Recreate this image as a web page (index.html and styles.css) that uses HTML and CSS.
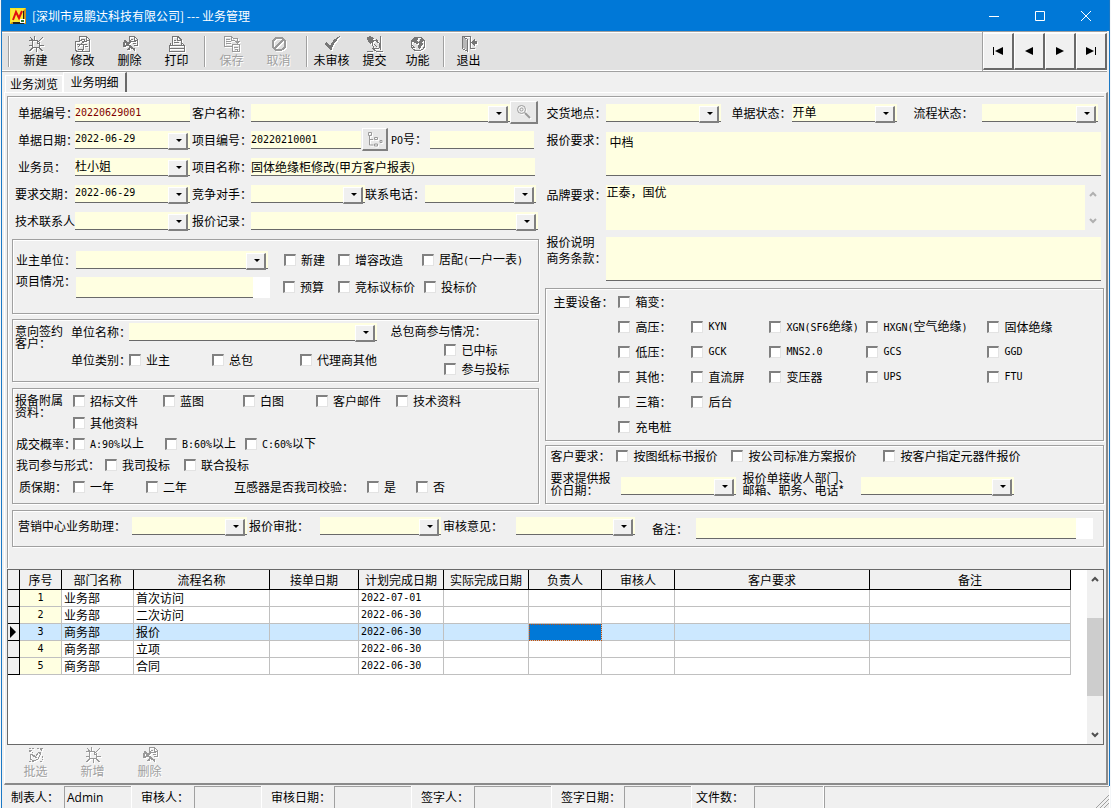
FILE: index.html
```html
<!DOCTYPE html>
<html lang="zh-CN">
<head>
<meta charset="utf-8">
<title>业务管理</title>
<link rel="stylesheet" href="styles.css">
</head>
<body>
<svg class="defs" aria-hidden="true">
  <symbol id="i-new" viewBox="0 0 16 16"><path d="M4.500 4.500h5l2 2v5h-7zM9.500 4.500v2.500h2.500M0.500 4.500h4M2 1l3 3.500M6.500 0v4.500M15 1l-4 4M12 9.500h4M11.500 12l3 3M8.500 12v4M4.500 12l-3 3M0.500 9.500h4"/></symbol>
  <symbol id="i-edit" viewBox="0 0 16 16"><path d="M4.500 5V.500h7l3 3v12h-9M11.500 1v3h3M6 3.500h4M7 5.500h5M9 8.500h3M10 10.500h3M.500 5.500h3l5-2 1 1.500-4 3.500h3v5l-2 2h-5l-1-2zM2 8.500h3M3 11l5-5M3 13.500h5"/></symbol>
  <symbol id="i-del" viewBox="0 0 16 16"><path d="M7.500 7V.500h5l3 3v6h-4M12.500 1v3h3M9 3.500h2M9 5.500h5M11 7.500h3"/><path class="thick" d="M3 5l3 3-2 1.500H1.500v-2zM5 8l8 6M5 9l4-4M9 10l-3 4"/></symbol>
  <symbol id="i-print" viewBox="0 0 16 16"><path d="M3.500 9V.500h5.500l3 3V9M8.500 1v3h3M5 4.500h2M5 6.500h5M.500 9.500h15v5.500H.500zM2 7.500L.500 9.500M13.500 7.500l2 2M1 12.500h14"/></symbol>
  <symbol id="i-save" viewBox="0 0 16 16"><path d="M8 10.500H.500v-10h7l3 3M7.500 1v3h3M2 3.500h4M2 5.500h5M2 7.500h5M8.500 8.500h7v7h-7zM10 11h4M10.500 13.500h3v2M10 2.500h3.500V6M11.500 5l2 2 2-2"/></symbol>
  <symbol id="i-stop" viewBox="0 0 16 16"><circle class="thick" cx="8" cy="8" r="6.500"/><path class="thick" d="M3.500 12.500l9-9"/></symbol>
  <symbol id="i-check" viewBox="0 0 16 16"><path class="solid" d="M0 8l3-2 3 4C8 5 11 2 16 0v1c-4 3-7 8-8.500 13H6z"/></symbol>
  <symbol id="i-submit" viewBox="0 0 16 16"><path class="solid" d="M0 1l3-1 4 2-1 3-3 3-2-2z"/><path d="M5 6l3-2 4 3 1 4-2 2-4-1-2-4zM7 8l3 3M13.500 0v14M9 3.500l2 2M0 15.500h6M9 15.500h7M5 12l4 3"/></symbol>
  <symbol id="i-globe" viewBox="0 0 16 16"><circle cx="8" cy="8" r="7"/><path class="solid" d="M3 3l4-2 1 2-1 2 2 1-1 2H6L5 7 2 6zM9 3l3-1 2 3-2 1 1 2-2 3-2 2-1-3 1-2-1-2 2-2zM2 9l3 2-1 2z"/></symbol>
  <symbol id="i-exit" viewBox="0 0 16 16"><path d="M1.500 12.500V.500h8v12h4M6.500 15.500v-12l-5-3v12z"/><path class="pale" d="M2 1l4 3v10l-4-2z"/><path class="solid" d="M10 6l4-4v3h2v3h-2v3z"/></symbol>
  <symbol id="i-batch" viewBox="0 0 16 16"><path stroke-dasharray="2 1" d="M1 1.500h6M9 1.500h6M1 4l4 2M14 3l-4 5M1 14.500h5M12 14.500h3M14.500 9v4"/><path d="M1.500 3l2 1M3 7l4 3 4-5 2 1-3 6-4 2-4-2zM12 3l3-2M5 8l4 3"/></symbol>
  <symbol id="i-find" viewBox="0 0 16 16"><circle cx="5.500" cy="5.500" r="4"/><circle cx="5.500" cy="5.500" r="1.500"/><path class="thick" d="M9 9l5 5"/></symbol>
  <symbol id="i-tree" viewBox="0 0 16 16"><path d="M1.500 1.500h3v3h-3zM7.500 6.500h3v2h-3zM13 9.500h2v2h-2zM7.500 13h3v2h-3zM2.500 5v9h4M3 8.500h3"/></symbol>
  <symbol id="i-up" viewBox="0 0 8 6"><path d="M1 5l3-3 3 3"/></symbol>
  <symbol id="i-down" viewBox="0 0 8 6"><path d="M1 1l3 3 3-3"/></symbol>
</svg>
<div class="window">
  <header class="titlebar">
    <svg class="app-icon" viewBox="0 0 16 16"><rect width="16" height="16" fill="#f8e51c"/><path fill="#a33a10" d="M16 0v16H0z" opacity=".5"/><path fill="#222" d="M14 3v13H3v-2h9V3z"/><rect x="1" y="1" width="12" height="13" fill="#fbea3c"/><path fill="none" stroke="#e01010" stroke-width="2" d="M3 12l3-8 3 6 3-7"/><rect x="10" y="11" width="5" height="4" fill="#fff"/><path fill="#2a7a35" d="M11 12h3v2h-3z"/></svg>
    <h1>[深圳市易鹏达科技有限公司] --- 业务管理</h1>
    <button class="cap" aria-label="最小化"><svg viewBox="0 0 12 12"><path d="M1 6.500h10"/></svg></button>
    <button class="cap" aria-label="最大化"><svg viewBox="0 0 12 12"><path d="M1.500 1.500h9v9h-9z"/></svg></button>
    <button class="cap" aria-label="关闭"><svg viewBox="0 0 12 12"><path d="M1 1l10 10M11 1L1 11"/></svg></button>
  </header>

  <div class="toolbar">
    <i class="grip"></i>
    <button class="tool"><svg><use href="#i-new"/></svg>新建</button>
    <button class="tool"><svg><use href="#i-edit"/></svg>修改</button>
    <button class="tool"><svg><use href="#i-del"/></svg>删除</button>
    <button class="tool"><svg><use href="#i-print"/></svg>打印</button>
    <i class="sep"></i>
    <button class="tool" disabled><svg><use href="#i-save"/></svg>保存</button>
    <button class="tool" disabled><svg><use href="#i-stop"/></svg>取消</button>
    <i class="sep"></i>
    <button class="tool narrow"><svg><use href="#i-check"/></svg>未审核</button>
    <button class="tool narrow"><svg><use href="#i-submit"/></svg>提交</button>
    <button class="tool narrow"><svg><use href="#i-globe"/></svg>功能</button>
    <i class="sep"></i>
    <button class="tool narrow"><svg><use href="#i-exit"/></svg>退出</button>
    <nav class="pager">
      <button aria-label="首条"><svg viewBox="0 0 12 8"><path d="M1 0h1v8H1zM11 0v8L3 4z"/></svg></button>
      <button aria-label="上一条"><svg viewBox="0 0 12 8"><path d="M10 0v8L2 4z"/></svg></button>
      <button aria-label="下一条"><svg viewBox="0 0 12 8"><path d="M2 0v8l8-4z"/></svg></button>
      <button aria-label="末条"><svg viewBox="0 0 12 8"><path d="M1 0v8l8-4zM10 0h1v8h-1z"/></svg></button>
    </nav>
  </div>

  <div class="tabs" role="tablist">
    <button class="tab" role="tab">业务浏览</button>
    <button class="tab active" role="tab" aria-selected="true">业务明细</button>
  </div>

  <main class="page">
    <form class="form">
      <div class="columns">
        <div class="col">
          <div class="row main-a">
            <label class="in-6" for="no">单据编号：</label><input id="no" class="field num red" value="20220629001">
            <label class="in-2" for="cust">客户名称：</label><span class="combo"><select id="cust"></select></span>
            <button type="button" class="mini" aria-label="查找客户"><svg><use href="#i-find"/></svg></button>
          </div>
          <div class="row main-b">
            <label class="in-6" for="date">单据日期：</label><span class="combo"><select id="date" class="num"><option>2022-06-29</option></select></span>
            <label class="in-2" for="proj">项目编号：</label><input id="proj" class="field num" value="20220210001">
            <button type="button" class="mini" aria-label="选择项目"><svg><use href="#i-tree"/></svg></button>
            <label class="in-3" for="po"><span class="num">PO</span>号：</label><input id="po" class="field">
          </div>
          <div class="row main-c">
            <label class="in-6" for="sales">业务员：</label><span class="combo"><select id="sales"><option>杜小姐</option></select></span>
            <label class="in-2" for="pname">项目名称：</label><input id="pname" class="field" value="固体绝缘柜修改(甲方客户报表)">
          </div>
          <div class="row main-d">
            <label class="in-3" for="due">要求交期：</label><span class="combo"><select id="due" class="num"><option>2022-06-29</option></select></span>
            <label class="in-2" for="rival">竞争对手：</label><span class="combo"><select id="rival"></select></span>
            <label for="tel">联系电话：</label><span class="combo"><select id="tel"></select></span>
          </div>
          <div class="row main-e">
            <label class="in-3" for="tech">技术联系人</label><span class="combo"><select id="tech"></select></span>
            <label class="in-2" for="log">报价记录：</label><span class="combo"><select id="log"></select></span>
          </div>

          <section class="group owner">
            <div class="row owner-a">
              <label class="in-3" for="owner">业主单位：</label><span class="combo"><select id="owner"></select></span>
              <label class="ck first"><input type="checkbox">新建</label>
              <label class="ck"><input type="checkbox">增容改造</label>
              <label class="ck"><input type="checkbox"><span>居配<span class="num">(</span>一户一表<span class="num">)</span></span></label>
            </div>
            <div class="row owner-b">
              <label class="in-3 top" for="state">项目情况：</label><span class="memo-s"><textarea id="state" class="field"></textarea></span>
              <label class="ck first"><input type="checkbox">预算</label>
              <label class="ck"><input type="checkbox">竞标议标价</label>
              <label class="ck"><input type="checkbox">投标价</label>
            </div>
          </section>

          <section class="group sign">
            <div class="two-line">意向签约<br>客户：</div>
            <div class="sign-mid">
              <div class="row unit-a"><label for="unit">单位名称：</label><span class="combo"><select id="unit"></select></span></div>
              <div class="row unit-b"><span>单位类别：</span>
                <label class="ck"><input type="checkbox">业主</label>
                <label class="ck"><input type="checkbox">总包</label>
                <label class="ck"><input type="checkbox">代理商其他</label>
              </div>
            </div>
            <div class="sign-end">
              <span>总包商参与情况：</span>
              <label class="ck"><input type="checkbox">已中标</label>
              <label class="ck"><input type="checkbox">参与投标</label>
            </div>
          </section>

          <section class="group docs">
            <div class="docs-files">
              <div class="two-line">报备附属<br>资料：</div>
              <label class="ck"><input type="checkbox">招标文件</label>
              <label class="ck"><input type="checkbox">蓝图</label>
              <label class="ck"><input type="checkbox">白图</label>
              <label class="ck"><input type="checkbox">客户邮件</label>
              <label class="ck"><input type="checkbox">技术资料</label>
              <label class="ck"><input type="checkbox">其他资料</label>
            </div>
            <div class="row odds"><span class="in-3">成交概率：</span>
              <label class="ck"><input type="checkbox"><span><span class="num">A:90%</span>以上</span></label>
              <label class="ck"><input type="checkbox"><span><span class="num">B:60%</span>以上</span></label>
              <label class="ck"><input type="checkbox"><span><span class="num">C:60%</span>以下</span></label>
            </div>
            <div class="row join"><span class="in-3">我司参与形式：</span>
              <label class="ck"><input type="checkbox">我司投标</label>
              <label class="ck"><input type="checkbox">联合投标</label>
            </div>
            <div class="row warranty"><span class="in-6">质保期：</span>
              <label class="ck"><input type="checkbox">一年</label>
              <label class="ck"><input type="checkbox">二年</label>
              <span>互感器是否我司校验：</span>
              <label class="ck"><input type="checkbox">是</label>
              <label class="ck"><input type="checkbox">否</label>
            </div>
          </section>
        </div>

        <div class="col">
          <div class="row place">
            <label for="place">交货地点：</label><span class="combo"><select id="place"></select></span>
            <label class="in-10" for="bill">单据状态：</label><span class="combo"><select id="bill"><option>开单</option></select></span>
            <label class="in-16" for="flow">流程状态：</label><span class="combo"><select id="flow"></select></span>
          </div>
          <div class="memo-row"><label for="m1">报价要求：</label><textarea id="m1" class="field memo inset">中档</textarea></div>
          <div class="memo-row scrolling"><label class="lower" for="m2">品牌要求：</label><textarea id="m2" class="field memo">正泰，国优</textarea>
            <div class="spin"><svg><use href="#i-up"/></svg><svg><use href="#i-down"/></svg></div></div>
          <div class="memo-row"><label class="raised" for="m3">报价说明<br>商务条款：</label><textarea id="m3" class="field memo"></textarea></div>

          <section class="group gear">
            <span>主要设备：</span>
            <label class="ck c2"><input type="checkbox">箱变：</label>
            <label class="ck c2"><input type="checkbox">高压：</label>
            <label class="ck"><input type="checkbox"><span class="num">KYN</span></label>
            <label class="ck"><input type="checkbox"><span><span class="num">XGN(SF6</span>绝缘<span class="num">)</span></span></label>
            <label class="ck"><input type="checkbox"><span><span class="num">HXGN(</span>空气绝缘<span class="num">)</span></span></label>
            <label class="ck"><input type="checkbox">固体绝缘</label>
            <label class="ck c2"><input type="checkbox">低压：</label>
            <label class="ck"><input type="checkbox"><span class="num">GCK</span></label>
            <label class="ck"><input type="checkbox"><span class="num">MNS2.0</span></label>
            <label class="ck"><input type="checkbox"><span class="num">GCS</span></label>
            <label class="ck"><input type="checkbox"><span class="num">GGD</span></label>
            <label class="ck c2"><input type="checkbox">其他：</label>
            <label class="ck"><input type="checkbox">直流屏</label>
            <label class="ck"><input type="checkbox">变压器</label>
            <label class="ck"><input type="checkbox"><span class="num">UPS</span></label>
            <label class="ck"><input type="checkbox"><span class="num">FTU</span></label>
            <label class="ck c2"><input type="checkbox">三箱：</label>
            <label class="ck"><input type="checkbox">后台</label>
            <label class="ck c2"><input type="checkbox">充电桩</label>
          </section>

          <section class="group wants">
            <div class="row wants-a"><span>客户要求：</span>
              <label class="ck"><input type="checkbox">按图纸标书报价</label>
              <label class="ck"><input type="checkbox">按公司标准方案报价</label>
              <label class="ck"><input type="checkbox">按客户指定元器件报价</label>
            </div>
            <div class="row wants-b">
              <label class="tight" for="qd">要求提供报<br>价日期：</label><span class="combo"><select id="qd"></select></span>
              <label class="tight in-6" for="rcv">报价单接收人部门、<br>邮箱、职务、电话*</label><span class="combo"><select id="rcv"></select></span>
            </div>
          </section>
        </div>
      </div>

      <section class="group review">
        <label for="asst">营销中心业务助理：</label><span class="combo"><select id="asst"></select></span>
        <label class="in-2" for="appr">报价审批：</label><span class="combo"><select id="appr"></select></span>
        <label class="in-2" for="opin">审核意见：</label><span class="combo"><select id="opin"></select></span>
        <label class="lower" for="note">备注：</label><span class="memo-s"><textarea id="note" class="field"></textarea></span>
      </section>
    </form>

    <div class="grid-frame">
      <table>
        <colgroup><col class="w-mark"><col class="w-no"><col class="w-dept"><col class="w-flow"><col class="w-recv"><col class="w-date"><col class="w-date"><col class="w-who"><col class="w-who"><col class="w-want"><col></colgroup>
        <thead><tr><th></th><th>序号</th><th>部门名称</th><th>流程名称</th><th>接单日期</th><th>计划完成日期</th><th>实际完成日期</th><th>负责人</th><th>审核人</th><th>客户要求</th><th>备注</th></tr></thead>
        <tbody>
          <tr><td></td><td>1</td><td>业务部</td><td>首次访问</td><td></td><td class="num">2022-07-01</td><td></td><td></td><td></td><td></td><td></td></tr>
          <tr><td></td><td>2</td><td>业务部</td><td>二次访问</td><td></td><td class="num">2022-06-30</td><td></td><td></td><td></td><td></td><td></td></tr>
          <tr class="current"><td><svg class="mark" viewBox="0 0 6 12"><path d="M0 0v12l6-6z"/></svg></td><td>3</td><td>商务部</td><td>报价</td><td></td><td class="num">2022-06-30</td><td></td><td class="cell-on"></td><td></td><td></td><td></td></tr>
          <tr><td></td><td>4</td><td>商务部</td><td>立项</td><td></td><td class="num">2022-06-30</td><td></td><td></td><td></td><td></td><td></td></tr>
          <tr><td></td><td>5</td><td>商务部</td><td>合同</td><td></td><td class="num">2022-06-30</td><td></td><td></td><td></td><td></td><td></td></tr>
        </tbody>
      </table>
      <div class="scrollbar"><svg><use href="#i-up"/></svg><i class="thumb"></i><svg><use href="#i-down"/></svg></div>
    </div>

    <div class="subbar">
      <button class="tool" disabled><svg><use href="#i-batch"/></svg>批选</button>
      <button class="tool" disabled><svg><use href="#i-new"/></svg>新增</button>
      <button class="tool" disabled><svg><use href="#i-del"/></svg>删除</button>
    </div>
  </main>

  <footer class="status">
    <span>制表人：</span><output>Admin</output>
    <span>审核人：</span><output></output>
    <span>审核日期：</span><output></output>
    <span>签字人：</span><output></output>
    <span>签字日期：</span><output></output>
    <span class="files">文件数：</span><output></output>
    <output class="rest"><svg class="size-grip" viewBox="0 0 14 14"><path d="M1 14L14 1M5 14l9-9M9 14l5-5"/></svg></output>
  </footer>
</div>
</body>
</html>
```
FILE: styles.css
```css
* { box-sizing: border-box; }
body {
  margin: 0;
  background: #f4f6f8;
  color: #000;
  font: 12px/16px "Noto Sans CJK SC", sans-serif;
}
button, input, select, textarea { font: inherit; color: inherit; margin: 0; padding: 0; border: 0; border-radius: 0; }
svg { display: block; flex: none; fill: none; stroke: currentColor; }
.defs { position: absolute; width: 0; height: 0; }
.thick { stroke-width: 2; }
.solid { fill: currentColor; stroke: none; }
.pale { fill: #b8b8b8; stroke: none; }
.num { font-family: "DejaVu Sans Mono", monospace; font-size: 10px; }

.window {
  display: flex;
  flex-direction: column;
  min-height: 100vh;
  margin: 0 1px;
  border: solid #1b78c4;
  border-width: 0 1px;
  background: #f0f0f0;
}

/* title bar */
.titlebar { display: flex; align-items: center; height: 31px; padding-left: 8px; background: #0078d7; color: #fff; }
.app-icon { width: 16px; height: 16px; stroke: none; }
.titlebar h1 { flex: 1; margin: 0 0 0 6px; font-size: 12px; font-weight: 400; }
.cap { display: grid; place-items: center; width: 46px; height: 31px; background: none; }
.cap svg { width: 12px; height: 12px; }

/* tool bar */
.toolbar {
  display: flex;
  height: 41px;
  margin: 0 2px 0 0;
  padding-left: 6px;
  border: solid #a0a0a0;
  border-width: 1px 0;
  background: #e1e1e1;
  box-shadow: inset 0 1px #fff, inset 0 -1px #fff;
}
.tool {
  display: flex;
  flex-direction: column;
  align-items: center;
  width: 47px;
  padding-top: 5px;
  background: none;
  white-space: nowrap;
}
.tool.narrow { width: 43px; }
.tool svg { width: 16px; height: 16px; color: #767676; filter: drop-shadow(1px 1px #fff); shape-rendering: crispEdges; }
.toolbar .tool { padding-top: 4px; }
.tool:disabled { color: #a0a0a0; text-shadow: 1px 1px #fff; }
.tool:disabled svg { color: #999; }
.grip, .sep { width: 2px; margin: 4px 2px; border-left: 1px solid #a0a0a0; border-right: 1px solid #fff; }
.grip { margin: 4px 2px 4px 0; }
.sep { margin: 4px 2px 4px 4px; }
.pager { display: flex; margin-left: auto; padding-top: 1px; border-left: 1px solid #a0a0a0; }
.pager button {
  display: grid;
  place-items: center;
  width: 31px;
  height: 37px;
  background: #f0f0f0;
  border: solid;
  border-width: 1px 2px 2px 1px;
  border-color: #fff #696969 #696969 #fff;
}
.pager svg { width: 12px; height: 8px; fill: #000; stroke: none; }

/* tabs */
.tabs { display: flex; align-items: flex-end; height: 20px; padding-left: 3px; }
.tab { width: 58px; height: 17px; background: #f0f0f0; border: solid #fff; border-width: 1px 1px 0; white-space: nowrap; line-height: 16px; }
.tab.active { width: 64px; height: 20px; padding-bottom: 2px; border-right: 2px solid #696969; }

.page {
  display: flex;
  flex: 1;
  flex-direction: column;
  margin: 0 1px 0 2px;
  padding: 3px 2px 0;
  border: solid;
  border-width: 1px 2px 2px 1px;
  border-color: #fff #8a8a8a #8a8a8a #fff;
}
.form { padding: 2px 0 21px 4px; border: solid #a0a0a0; border-width: 1px 0 0 1px; box-shadow: inset 1px 1px #fff; }
.columns { display: grid; grid-template-columns: minmax(0, 527fr) minmax(0, 558fr); gap: 6px; }

.row { display: grid; align-items: center; height: 27px; white-space: nowrap; }
.row > * { min-width: 0; }
.in-2 { padding-left: 2px; }
.in-3 { padding-left: 3px; }
.in-6 { padding-left: 6px; }
.in-10 { padding-left: 10px; }
.in-16 { padding-left: 16px; }
.top { align-self: start; }

/* fields */
.field { display: block; width: 100%; height: 18px; background: #ffffe1; border-bottom: 1px solid #696969; outline: 0; }
textarea.field { resize: none; overflow: hidden; line-height: 14px; }
.red { color: #800000; }
.combo { position: relative; display: block; height: 18px; background: #ffffe1; border-bottom: 1px solid #696969; }
.combo select { display: block; width: 100%; height: 17px; appearance: none; background: none; outline: 0; }
.combo::after {
  content: "";
  position: absolute;
  top: 2px;
  right: 2px;
  width: 17px;
  height: 14px;
  background: #f0f0f0;
  border: solid;
  border-width: 1px 2px 2px 1px;
  border-color: #fff #808080 #808080 #fff;
  pointer-events: none;
}
.combo::before {
  content: "";
  position: absolute;
  z-index: 1;
  top: 8px;
  right: 8px;
  border: solid transparent;
  border-width: 3px 3px 0;
  border-top-color: #000;
  pointer-events: none;
}
.mini {
  display: grid;
  place-items: center;
  height: 23px;
  background: #e8e8e8;
  border: solid;
  border-width: 1px 2px 2px 1px;
  border-color: #fff #808080 #808080 #fff;
  color: #999;
}
.mini svg { width: 16px; height: 16px; filter: drop-shadow(1px 1px #fff); }
.ck { display: flex; align-items: center; gap: 5px; white-space: nowrap; }
.ck input {
  flex: none;
  width: 12px;
  height: 12px;
  appearance: none;
  background: #fff;
  border: solid;
  border-width: 2px 1px 1px 2px;
  border-color: #808080 #e3e3e3 #e3e3e3 #808080;
}
.two-line, .tight { line-height: 12px; white-space: nowrap; }

/* header rows */
.main-a { grid-template-columns: 63px 115px 61px 1fr 28px; padding-right: 1px; }
.main-b { grid-template-columns: 63px 115px 61px 110px 27px 42px 1fr; padding-right: 5px; }
.main-b .mini { margin-left: 1px; }
.main-c { grid-template-columns: 63px 115px 61px 1fr; padding-right: 4px; }
.main-d { grid-template-columns: 63px 115px 61px 114px 60px 1fr; padding-right: 3px; }
.main-e { grid-template-columns: 63px 115px 61px 1fr; padding-right: 1px; }

.group { border: 1px solid #a0a0a0; box-shadow: inset 1px 1px #fff, 1px 1px #fff; }
.owner { margin-top: 5px; padding: 6px 0 12px; }
.owner-a { grid-template-columns: 63px 192px 70px 84px 1fr; }
.owner-a .first { padding-left: 16px; }
.owner-b { height: 28px; grid-template-columns: 63px 194px 68px 86px 1fr; }
.owner-b .first { padding-left: 13px; }
.memo-s { display: block; height: 21px; padding-right: 17px; background: #fff; }
.memo-s .field { height: 21px; }

.sign { display: flex; margin-top: 5px; padding-bottom: 3px; }
.sign .two-line { width: 58px; padding: 5px 0 0 2px; }
.sign-mid { flex: 1; }
.sign-end { display: grid; grid-auto-rows: 19px; align-items: center; width: 161px; padding: 1px 0 0 13px; }
.sign-end .ck { padding-left: 54px; }
.unit-a { height: 23px; grid-template-columns: 58px 1fr; }
.unit-b { height: 34px; grid-template-columns: 58px 83px 88px 1fr; }

.docs { margin-top: 6px; padding-bottom: 4px; }
.docs-files { display: grid; grid-template: 24px 19px / 60px 90px 80px 73px 80px 1fr; align-items: center; }
.docs-files .two-line { grid-row: span 2; align-self: start; padding: 5px 0 0 2px; }
.odds { height: 24px; grid-template-columns: 60px 92px 80px 1fr; }
.join { height: 18px; grid-template-columns: 92px 79px 1fr; }
.warranty { height: 25px; grid-template-columns: 60px 73px 88px 133px 49px 1fr; }

.place { grid-template-columns: 61px 115px 71px 105px 85px 1fr; padding: 0 6px 0 0; }
.place > label:first-child { padding-left: 1px; }
.memo-row { display: grid; grid-template-columns: 61px 1fr; padding-right: 3px; margin-top: 7px; }
.place + .memo-row { margin-top: 6px; }
.memo-row label { white-space: nowrap; padding-left: 1px; }
.memo-row .lower { padding-top: 2px; }
.raised { margin-top: -3px; }
.memo { height: 44px; }
.memo.inset { padding: 3px; }
.scrolling { grid-template-columns: 61px 1fr 16px; margin-top: 9px; }
.scrolling .memo { height: 45px; border-bottom: 0; }
.spin { display: flex; flex-direction: column; justify-content: space-between; align-items: center; padding: 6px 0; color: #b0b0b0; }
.spin svg, .scrollbar svg { width: 8px; height: 6px; stroke-width: 2; }

.gear {
  display: grid;
  grid-template-columns: 72px 73px 78px 97px 121px 1fr;
  grid-auto-rows: 25px;
  align-items: center;
  margin-top: 7px;
  padding-bottom: 1px;
}
.gear > span { padding-left: 7px; }
.gear .c2 { grid-column-start: 2; }
.wants { margin-top: 4px; }
.wants > .row { padding-left: 4px; }
.wants-a { height: 19px; grid-template-columns: 66px 115px 152px 1fr; }
.wants-b { height: 38px; grid-template-columns: 71px 115px 125px 153px; }
.wants-b .combo { margin-top: 4px; }

.review {
  display: grid;
  grid-template-columns: 114px 115px 73px 121px 75px 119px 61px 1fr;
  align-items: center;
  height: 37px;
  margin-top: 6px;
  padding: 0 10px 5px 5px;
  white-space: nowrap;
}
.review .lower { padding: 6px 0 0 17px; }
.review .memo-s { margin-top: 5px; }

/* process grid */
.grid-frame { display: flex; flex: 1; margin-top: 1px; border: 1px solid #696969; background: #fff; }
table { flex: 1; align-self: flex-start; table-layout: fixed; width: 0; margin-right: 16px; border-spacing: 0; }
.w-mark { width: 12px; }
.w-no { width: 42px; }
.w-dept { width: 72px; }
.w-flow { width: 136px; }
.w-recv { width: 89px; }
.w-date { width: 85px; }
.w-who { width: 73px; }
.w-want { width: 195px; }
th, td { padding: 0 2px; text-align: left; white-space: nowrap; border: solid #c0c0c0; border-width: 0 1px 1px 0; }
th { height: 20px; font-weight: 400; text-align: center; background: #f0f0f0; border-color: #000; }
td { height: 17px; line-height: 16px; }
td:first-child { background: #f0f0f0; border-color: #000; }
td:nth-child(2) { background: #ffffe1; text-align: center; font-family: "DejaVu Sans Mono", monospace; font-size: 10px; }
.current td:not(:first-child) { background: #cce8ff; }
.current td.cell-on { background: #0078d7; outline: 1px dotted #c05010; outline-offset: -1px; }
.mark { width: 6px; height: 12px; fill: #000; stroke: none; }
.scrollbar { display: flex; flex-direction: column; align-items: center; width: 16px; padding: 6px 0; background: #f0f0f0; color: #505050; }
.thumb { width: 100%; height: 78px; margin: 36px 0 auto; background: #cdcdcd; }

.subbar { display: flex; gap: 10px; height: 38px; padding-left: 5px; }
.subbar .tool { padding-top: 2px; }

/* status bar */
.status {
  display: grid;
  grid-template-columns: 61px 67px 61px 67px 71px 77px 61px 77px 71px 67px 61px 69px 1fr;
  column-gap: 1px;
  height: 23px;
  padding-top: 1px;
}
.status span { padding: 3px 0 0 9px; white-space: nowrap; }
.status .files { padding-left: 4px; }
.status output { display: flex; align-items: center; padding-left: 2px; border: solid #a0a0a0; border-width: 1px 0 0 1px; box-shadow: 1px 0 #fff; font-family: "Open Sans", sans-serif; }
.status .rest { justify-content: flex-end; align-items: flex-end; }
.size-grip { width: 14px; height: 14px; color: #a0a0a0; }
```
